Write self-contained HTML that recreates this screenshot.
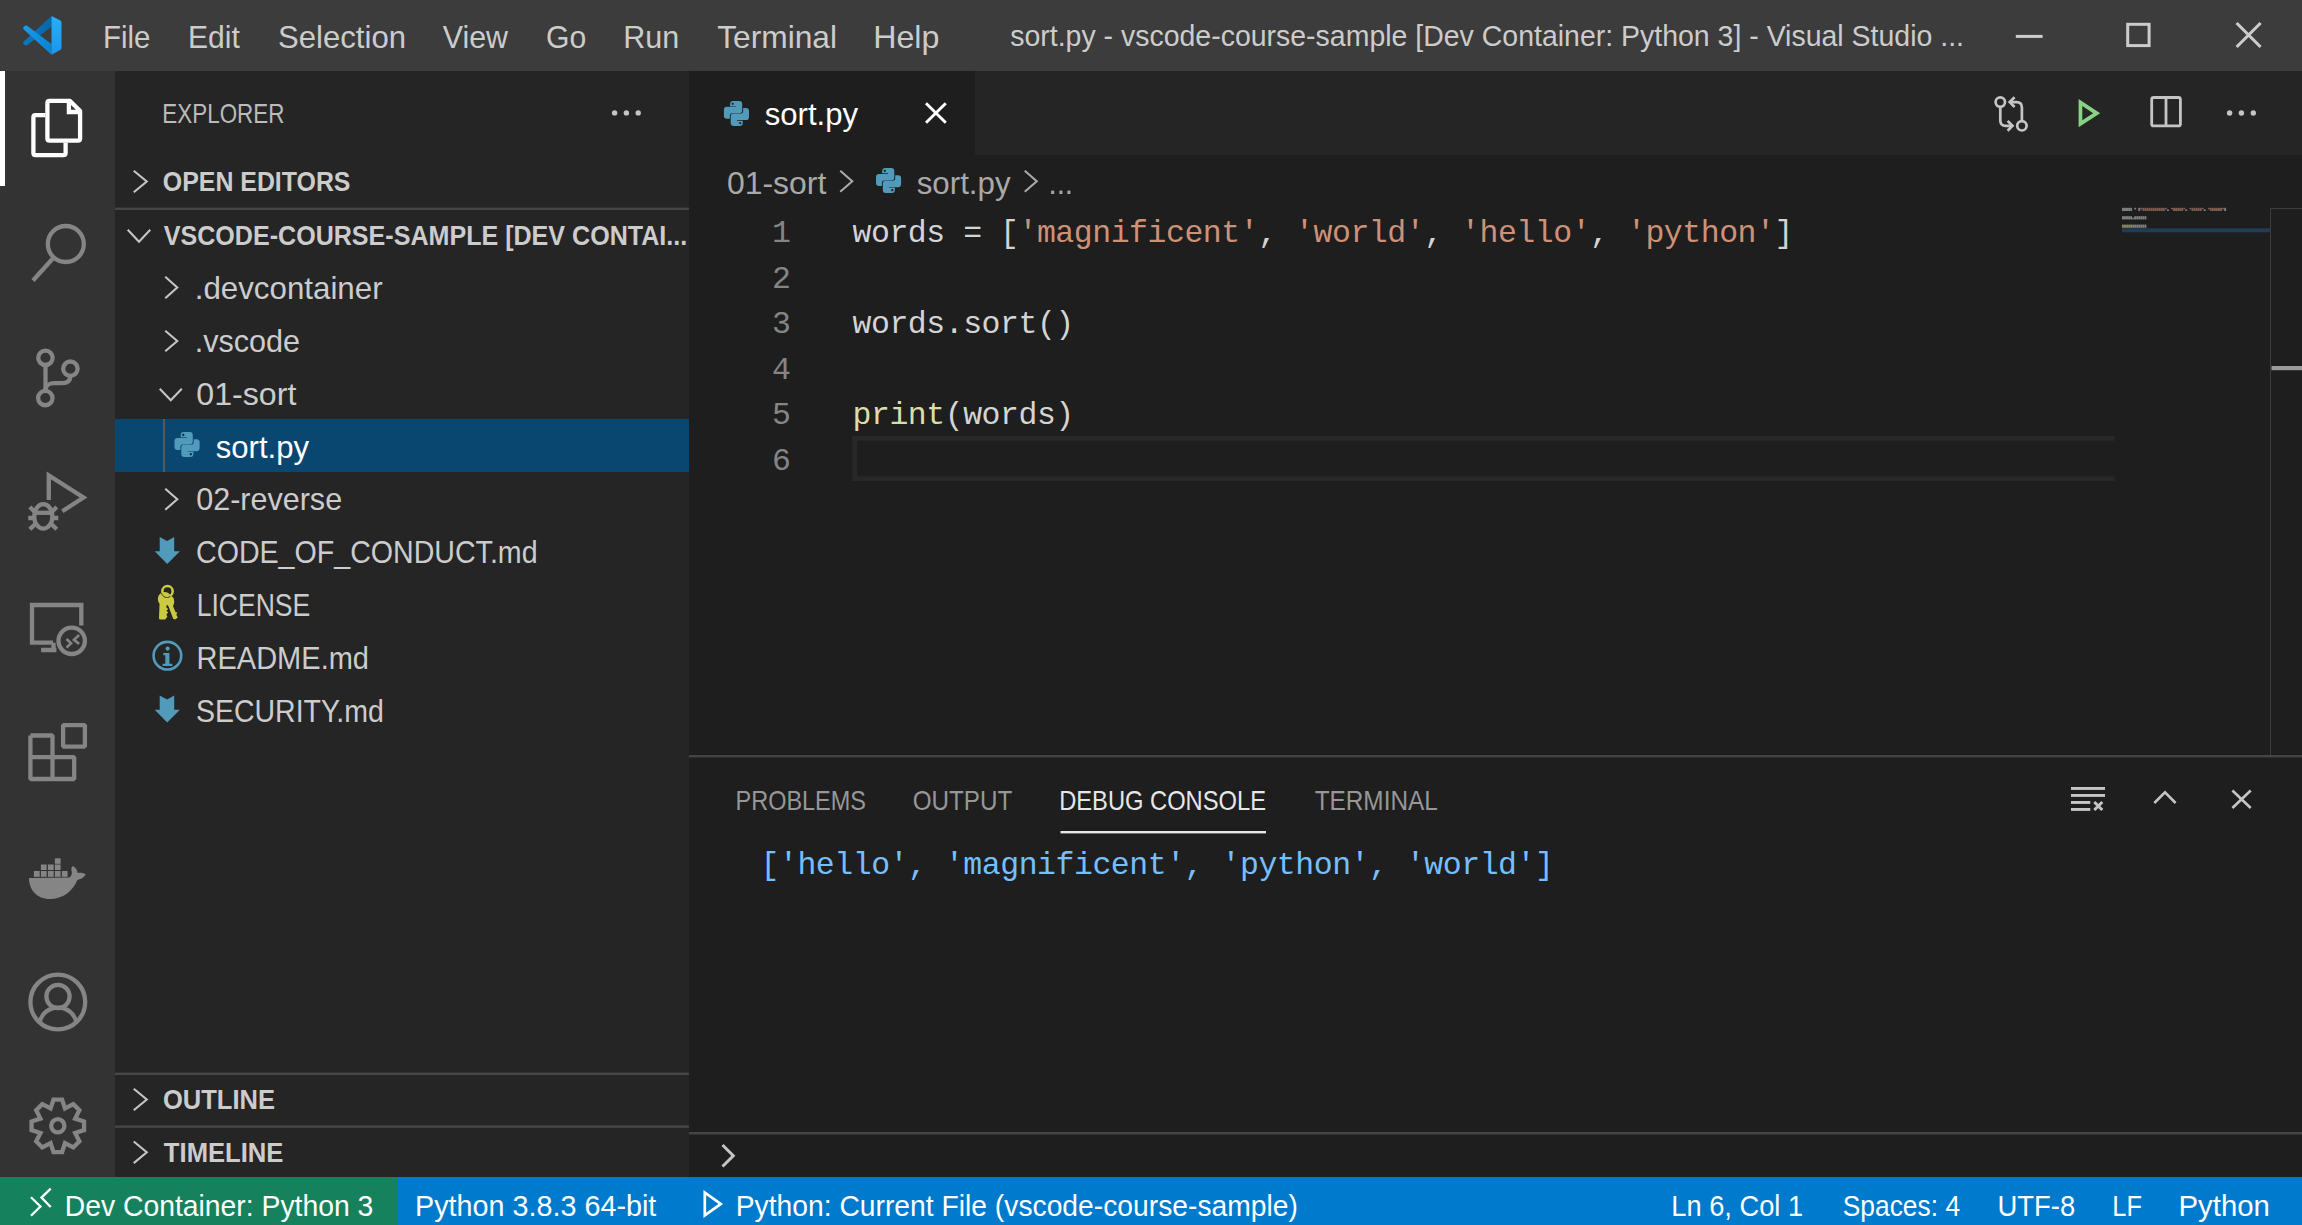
<!DOCTYPE html><html><head><meta charset="utf-8"><style>html,body{margin:0;padding:0;width:2302px;height:1225px;overflow:hidden;background:#1e1e1e}svg{position:absolute;left:0;top:0;display:block}</style></head><body><svg width="2302" height="1225" viewBox="0 0 2302 1225" font-family='&quot;Liberation Sans&quot;, sans-serif'><rect x="0" y="0" width="2302" height="71" fill="#3c3c3c"/>
<rect x="0" y="71" width="115" height="1106" fill="#333333"/>
<rect x="115" y="71" width="574" height="1106" fill="#252526"/>
<rect x="689" y="71" width="1613" height="1106" fill="#1e1e1e"/>
<rect x="689" y="71" width="1613" height="84" fill="#252526"/>
<rect x="689" y="71" width="286" height="84" fill="#1e1e1e"/>
<rect x="0" y="71" width="5" height="115" fill="#ffffff"/>
<rect x="115" y="207.6" width="574" height="2.4" fill="#464647"/>
<rect x="115" y="1072.6" width="574" height="2.4" fill="#464647"/>
<rect x="115" y="1125.4" width="574" height="2.4" fill="#464647"/>
<rect x="115" y="419" width="574" height="53" fill="#094771"/>
<rect x="163" y="419" width="2" height="53" fill="#585858"/>
<rect x="852.5" y="436" width="1262" height="4.8" fill="#282828"/>
<rect x="852.5" y="476.2" width="1262" height="4.8" fill="#282828"/>
<rect x="852.5" y="436" width="4.8" height="45" fill="#282828"/>
<rect x="2270" y="208" width="1" height="547" fill="#3c3c3c"/><rect x="2270" y="208" width="32" height="1" fill="#3c3c3c"/>
<rect x="2271.5" y="366" width="30.5" height="4.2" fill="#9a9a9a"/>
<rect x="2122" y="228.3" width="148" height="4" fill="#264f78" opacity="0.62"/>
<rect x="689" y="755" width="1613" height="2.4" fill="#444444"/>
<rect x="1060.5" y="831" width="205.5" height="2.4" fill="#e7e7e7"/>
<rect x="689" y="1132" width="1613" height="2.4" fill="#464646"/>
<rect x="0" y="1177" width="2302" height="48" fill="#007acc"/>
<rect x="0" y="1177" width="397.5" height="48" fill="#16825d"/>
<g><text x="103.07" y="48.00" font-size="31.74" font-weight="400" fill="#cccccc" textLength="47.30" lengthAdjust="spacingAndGlyphs">File</text><text x="187.98" y="48.00" font-size="31.74" font-weight="400" fill="#cccccc" textLength="51.83" lengthAdjust="spacingAndGlyphs">Edit</text><text x="278.08" y="48.00" font-size="31.74" font-weight="400" fill="#cccccc" textLength="127.94" lengthAdjust="spacingAndGlyphs">Selection</text><text x="442.79" y="48.00" font-size="31.74" font-weight="400" fill="#cccccc" textLength="65.21" lengthAdjust="spacingAndGlyphs">View</text><text x="546.04" y="48.00" font-size="31.74" font-weight="400" fill="#cccccc" textLength="40.24" lengthAdjust="spacingAndGlyphs">Go</text><text x="623.31" y="48.00" font-size="31.74" font-weight="400" fill="#cccccc" textLength="55.95" lengthAdjust="spacingAndGlyphs">Run</text><text x="717.16" y="48.00" font-size="31.74" font-weight="400" fill="#cccccc" textLength="119.92" lengthAdjust="spacingAndGlyphs">Terminal</text><text x="873.15" y="48.00" font-size="31.74" font-weight="400" fill="#cccccc" textLength="66.23" lengthAdjust="spacingAndGlyphs">Help</text><text x="1010.21" y="46.00" font-size="29.30" font-weight="400" fill="#cccccc" textLength="953.77" lengthAdjust="spacingAndGlyphs">sort.py - vscode-course-sample [Dev Container: Python 3] - Visual Studio ...</text><text x="162.34" y="123.00" font-size="26.86" font-weight="400" fill="#bbbbbb" textLength="122.07" lengthAdjust="spacingAndGlyphs">EXPLORER</text><text x="162.85" y="191.00" font-size="26.86" font-weight="700" fill="#cccccc" textLength="187.61" lengthAdjust="spacingAndGlyphs">OPEN EDITORS</text><text x="163.77" y="244.70" font-size="26.86" font-weight="700" fill="#cccccc" textLength="523.44" lengthAdjust="spacingAndGlyphs">VSCODE-COURSE-SAMPLE [DEV CONTAI...</text><text x="194.72" y="299.20" font-size="31.74" font-weight="400" fill="#cccccc" textLength="187.84" lengthAdjust="spacingAndGlyphs">.devcontainer</text><text x="194.68" y="352.00" font-size="31.74" font-weight="400" fill="#cccccc" textLength="105.42" lengthAdjust="spacingAndGlyphs">.vscode</text><text x="196.33" y="404.80" font-size="31.74" font-weight="400" fill="#cccccc" textLength="99.99" lengthAdjust="spacingAndGlyphs">01-sort</text><text x="215.73" y="457.60" font-size="31.74" font-weight="400" fill="#ffffff" textLength="93.24" lengthAdjust="spacingAndGlyphs">sort.py</text><text x="196.24" y="510.40" font-size="31.74" font-weight="400" fill="#cccccc" textLength="145.87" lengthAdjust="spacingAndGlyphs">02-reverse</text><text x="196.02" y="563.20" font-size="31.74" font-weight="400" fill="#cccccc" textLength="341.55" lengthAdjust="spacingAndGlyphs">CODE_OF_CONDUCT.md</text><text x="196.63" y="616.00" font-size="31.74" font-weight="400" fill="#cccccc" textLength="113.66" lengthAdjust="spacingAndGlyphs">LICENSE</text><text x="196.52" y="668.80" font-size="31.74" font-weight="400" fill="#cccccc" textLength="172.48" lengthAdjust="spacingAndGlyphs">README.md</text><text x="195.89" y="721.60" font-size="31.74" font-weight="400" fill="#cccccc" textLength="188.02" lengthAdjust="spacingAndGlyphs">SECURITY.md</text><text x="162.97" y="1109.00" font-size="26.86" font-weight="700" fill="#cccccc" textLength="112.07" lengthAdjust="spacingAndGlyphs">OUTLINE</text><text x="163.87" y="1162.00" font-size="26.86" font-weight="700" fill="#cccccc" textLength="119.55" lengthAdjust="spacingAndGlyphs">TIMELINE</text><text x="764.73" y="125.00" font-size="31.74" font-weight="400" fill="#ffffff" textLength="93.24" lengthAdjust="spacingAndGlyphs">sort.py</text><text x="726.92" y="194.00" font-size="31.74" font-weight="400" fill="#a9a9a9" textLength="99.44" lengthAdjust="spacingAndGlyphs">01-sort</text><text x="916.73" y="194.00" font-size="31.74" font-weight="400" fill="#a9a9a9" textLength="93.83" lengthAdjust="spacingAndGlyphs">sort.py</text><text x="1048.47" y="194.00" font-size="31.74" font-weight="400" fill="#a9a9a9" textLength="24.58" lengthAdjust="spacingAndGlyphs">...</text><text x="735.55" y="809.50" font-size="26.86" font-weight="400" fill="#979797" textLength="130.39" lengthAdjust="spacingAndGlyphs">PROBLEMS</text><text x="912.69" y="809.50" font-size="26.86" font-weight="400" fill="#979797" textLength="99.58" lengthAdjust="spacingAndGlyphs">OUTPUT</text><text x="1059.16" y="809.50" font-size="26.86" font-weight="400" fill="#e7e7e7" textLength="206.84" lengthAdjust="spacingAndGlyphs">DEBUG CONSOLE</text><text x="1314.65" y="809.50" font-size="26.86" font-weight="400" fill="#979797" textLength="123.13" lengthAdjust="spacingAndGlyphs">TERMINAL</text><text x="64.78" y="1216.00" font-size="29.30" font-weight="400" fill="#ffffff" textLength="308.51" lengthAdjust="spacingAndGlyphs">Dev Container: Python 3</text><text x="415.09" y="1216.00" font-size="29.30" font-weight="400" fill="#ffffff" textLength="241.23" lengthAdjust="spacingAndGlyphs">Python 3.8.3 64-bit</text><text x="735.79" y="1216.00" font-size="29.30" font-weight="400" fill="#ffffff" textLength="562.09" lengthAdjust="spacingAndGlyphs">Python: Current File (vscode-course-sample)</text><text x="1671.32" y="1216.00" font-size="29.30" font-weight="400" fill="#ffffff" textLength="131.77" lengthAdjust="spacingAndGlyphs">Ln 6, Col 1</text><text x="1842.75" y="1216.00" font-size="29.30" font-weight="400" fill="#ffffff" textLength="117.30" lengthAdjust="spacingAndGlyphs">Spaces: 4</text><text x="1997.47" y="1216.00" font-size="29.30" font-weight="400" fill="#ffffff" textLength="77.72" lengthAdjust="spacingAndGlyphs">UTF-8</text><text x="2112.36" y="1216.00" font-size="29.30" font-weight="400" fill="#ffffff" textLength="29.66" lengthAdjust="spacingAndGlyphs">LF</text><text x="2178.48" y="1216.00" font-size="29.30" font-weight="400" fill="#ffffff" textLength="91.42" lengthAdjust="spacingAndGlyphs">Python</text></g><text x="772.06" y="242.00" font-size="31.50" fill="#858585" font-family='&quot;Liberation Mono&quot;, monospace' xml:space="preserve">1</text><text x="852.50 870.94 889.38 907.82 926.26 944.70 963.14 981.58 1000.02" y="242.00" font-size="31.50" fill="#d4d4d4" font-family='&quot;Liberation Mono&quot;, monospace' xml:space="preserve">words&#160;=&#160;[</text><text x="1018.46 1036.90 1055.34 1073.78 1092.22 1110.66 1129.10 1147.54 1165.98 1184.42 1202.86 1221.30 1239.74" y="242.00" font-size="31.50" fill="#ce9178" font-family='&quot;Liberation Mono&quot;, monospace' xml:space="preserve">&#x27;magnificent&#x27;</text><text x="1258.18 1276.62" y="242.00" font-size="31.50" fill="#d4d4d4" font-family='&quot;Liberation Mono&quot;, monospace' xml:space="preserve">,&#160;</text><text x="1295.06 1313.50 1331.94 1350.38 1368.82 1387.26 1405.70" y="242.00" font-size="31.50" fill="#ce9178" font-family='&quot;Liberation Mono&quot;, monospace' xml:space="preserve">&#x27;world&#x27;</text><text x="1424.14 1442.58" y="242.00" font-size="31.50" fill="#d4d4d4" font-family='&quot;Liberation Mono&quot;, monospace' xml:space="preserve">,&#160;</text><text x="1461.02 1479.46 1497.90 1516.34 1534.78 1553.22 1571.66" y="242.00" font-size="31.50" fill="#ce9178" font-family='&quot;Liberation Mono&quot;, monospace' xml:space="preserve">&#x27;hello&#x27;</text><text x="1590.10 1608.54" y="242.00" font-size="31.50" fill="#d4d4d4" font-family='&quot;Liberation Mono&quot;, monospace' xml:space="preserve">,&#160;</text><text x="1626.98 1645.42 1663.86 1682.30 1700.74 1719.18 1737.62 1756.06" y="242.00" font-size="31.50" fill="#ce9178" font-family='&quot;Liberation Mono&quot;, monospace' xml:space="preserve">&#x27;python&#x27;</text><text x="1774.50" y="242.00" font-size="31.50" fill="#d4d4d4" font-family='&quot;Liberation Mono&quot;, monospace' xml:space="preserve">]</text><text x="772.06" y="287.60" font-size="31.50" fill="#858585" font-family='&quot;Liberation Mono&quot;, monospace' xml:space="preserve">2</text><text x="772.06" y="333.20" font-size="31.50" fill="#858585" font-family='&quot;Liberation Mono&quot;, monospace' xml:space="preserve">3</text><text x="852.50 870.94 889.38 907.82 926.26 944.70 963.14 981.58 1000.02 1018.46 1036.90 1055.34" y="333.20" font-size="31.50" fill="#d4d4d4" font-family='&quot;Liberation Mono&quot;, monospace' xml:space="preserve">words.sort()</text><text x="772.06" y="378.80" font-size="31.50" fill="#858585" font-family='&quot;Liberation Mono&quot;, monospace' xml:space="preserve">4</text><text x="772.06" y="424.40" font-size="31.50" fill="#858585" font-family='&quot;Liberation Mono&quot;, monospace' xml:space="preserve">5</text><text x="852.50 870.94 889.38 907.82 926.26" y="424.40" font-size="31.50" fill="#dcdcaa" font-family='&quot;Liberation Mono&quot;, monospace' xml:space="preserve">print</text><text x="944.70 963.14 981.58 1000.02 1018.46 1036.90 1055.34" y="424.40" font-size="31.50" fill="#d4d4d4" font-family='&quot;Liberation Mono&quot;, monospace' xml:space="preserve">(words)</text><text x="772.06" y="470.00" font-size="31.50" fill="#858585" font-family='&quot;Liberation Mono&quot;, monospace' xml:space="preserve">6</text><text x="760.50 778.94 797.38 815.82 834.26 852.70 871.14 889.58 908.02 926.46 944.90 963.34 981.78 1000.22 1018.66 1037.10 1055.54 1073.98 1092.42 1110.86 1129.30 1147.74 1166.18 1184.62 1203.06 1221.50 1239.94 1258.38 1276.82 1295.26 1313.70 1332.14 1350.58 1369.02 1387.46 1405.90 1424.34 1442.78 1461.22 1479.66 1498.10 1516.54 1534.98" y="874.00" font-size="31.50" fill="#75beff" font-family='&quot;Liberation Mono&quot;, monospace' xml:space="preserve">[&#x27;hello&#x27;,&#160;&#x27;magnificent&#x27;,&#160;&#x27;python&#x27;,&#160;&#x27;world&#x27;]</text><!-- vscode logo -->
<defs>
<linearGradient id="lg1" x1="0" y1="0" x2="1" y2="0"><stop offset="0" stop-color="#0b78c2"/><stop offset="1" stop-color="#0767a8"/></linearGradient>
<linearGradient id="lg2" x1="0" y1="0" x2="1" y2="0"><stop offset="0" stop-color="#1b9be8"/><stop offset="1" stop-color="#0a83d2"/></linearGradient>
<linearGradient id="lg3" x1="0" y1="0" x2="0" y2="1"><stop offset="0" stop-color="#26aef6"/><stop offset="1" stop-color="#1c97ec"/></linearGradient>
</defs>
<path d="M51.5,15.9 L51.5,26.7 L27.3,45 Q26,46 24.6,44.8 L23.6,43.9 Q22.4,42.6 23.8,41.4 Z" fill="url(#lg1)"/>
<path d="M26.8,25.4 L51.5,43.9 L51.5,54.7 L23.6,29.3 Q22.4,28 23.7,26.9 L24.5,26.2 Q25.6,25.2 26.8,25.4 Z" fill="url(#lg2)"/>
<path d="M51.5,15.9 L60.2,20.2 Q61.5,20.9 61.5,22.4 V48 Q61.5,49.5 60.2,50.1 L51.5,54.7 Z" fill="url(#lg3)"/>
<!-- activity bar icons -->
<g fill="none" stroke="#ffffff" stroke-width="4.3" stroke-linejoin="round">
 <path d="M47.4,103 Q47.4,100.9 49.5,100.9 H70 L80.1,111 V138.5 Q80.1,140.6 78,140.6 H49.5 Q47.4,140.6 47.4,138.5 Z"/>
 <path d="M68.9,100.9 V112 H80.1" stroke-linejoin="miter"/>
 <path d="M45.3,115.2 H35.5 Q33.4,115.2 33.4,117.3 V153 Q33.4,155.1 35.5,155.1 H63.5 Q65.6,155.1 65.6,153 V142.8"/>
</g>
<g fill="none" stroke="#858585" stroke-width="4.3">
 <circle cx="65.8" cy="244" r="18"/>
 <path d="M33,280.5 L52.8,258.5"/>
 <circle cx="45.45" cy="357.8" r="7.2"/>
 <circle cx="45.3" cy="398.05" r="7.2"/>
 <circle cx="70.4" cy="368.7" r="7.2"/>
 <path d="M45.5,365 V390.8"/>
 <path d="M70.4,376 C70.4,381 67,383.2 62,383.2 H53.5 C49,383.2 45.5,386 45.5,390.5"/>
 <path d="M48.8,500 V475.5 L83.5,497.5 L62.3,511.2" stroke-linejoin="miter"/>
 <ellipse cx="43.3" cy="516.4" rx="9.1" ry="12.2"/>
 <path d="M34.5,512.8 H52.1"/>
 <path d="M29.8,507 L35.2,512.3 M28.3,518 H33.5 M29.8,529.3 L35,524.3 M56.8,507 L51.4,512.3 M58.3,518 H53.1 M56.8,529.3 L51.6,524.3"/>
 <path d="M53,642.7 H32 V605 H81.3 V625.5"/>
 <path d="M41.1,650 H56.4 M53.5,642.7 V650" stroke-width="4.3"/>
 <circle cx="71.7" cy="640.8" r="13.2"/>
 <path d="M66.5,639 L71.1,643.3 L66.5,647.6 M79.1,635 L73.9,639.9 L79.1,643.9" stroke-width="2.6"/>
 <path d="M30.4,735.5 H52.5 V779 M30.4,735.5 V779 H74.2 V757.2 H30.4" stroke-linejoin="bevel"/>
 <rect x="63.1" y="725.1" width="21.8" height="21.5" stroke-linejoin="bevel"/>
 <circle cx="57.8" cy="1002" r="27.4"/>
 <circle cx="58" cy="996.5" r="11.6"/>
 <path d="M40,1021 A18.5,17.5 0 0 1 76,1021"/>
 <circle cx="57.8" cy="1125.8" r="6.6"/>
 
</g>
<g fill="#858585">
 <rect x="33.9" y="871" width="5.8" height="5.8"/><rect x="40.9" y="871" width="5.7" height="5.8"/><rect x="47.9" y="871" width="5.8" height="5.8"/><rect x="54.9" y="871" width="5.7" height="5.8"/><rect x="61.9" y="871" width="5.7" height="5.8"/>
 <rect x="40.9" y="864.5" width="5.7" height="5.5"/><rect x="47.9" y="864.5" width="5.8" height="5.5"/><rect x="54.9" y="864.5" width="5.7" height="5.5"/>
 <rect x="54.9" y="858.3" width="5.7" height="5.5"/>
 <path d="M29,878 L69.5,877.6 C71.5,876 72.5,873 71.5,870.5 C71,868 72,866 73.3,866.2 C75.5,867.5 77.5,870 77.6,873 C80,872.5 84,873 85.8,874.5 C84,877.5 80.5,879.5 77.3,880 C73,891 63,899 49.7,899 C37,899 29,890 29,878 Z"/>
</g>
<path d="M50.61,1108.43 L53.50,1099.55 L62.10,1099.55 L64.99,1108.43 L73.32,1104.20 L79.40,1110.28 L75.17,1118.61 L84.05,1121.50 L84.05,1130.10 L75.17,1132.99 L79.40,1141.32 L73.32,1147.40 L64.99,1143.17 L62.10,1152.05 L53.50,1152.05 L50.61,1143.17 L42.28,1147.40 L36.20,1141.32 L40.43,1132.99 L31.55,1130.10 L31.55,1121.50 L40.43,1118.61 L36.20,1110.28 L42.28,1104.20 Z" fill="none" stroke="#858585" stroke-width="4.3" stroke-linejoin="miter"/>
<g transform="translate(723.90,100.90) scale(1.000)"><path d="M12,5.9 H3 Q0,5.9 0,9 V14.9 Q0,17.9 3,17.9 H5.9 V14.6 Q5.9,12.4 8.5,12.4 H15.5 Q18.3,12.4 18.3,9.6 V3 Q18.3,0 15.3,0 H9.2 Q6.2,0 6.2,3 V5.3 H12 Z" fill="#519aba"/><path d="M12,5.9 H3 Q0,5.9 0,9 V14.9 Q0,17.9 3,17.9 H5.9 V14.6 Q5.9,12.4 8.5,12.4 H15.5 Q18.3,12.4 18.3,9.6 V3 Q18.3,0 15.3,0 H9.2 Q6.2,0 6.2,3 V5.3 H12 Z" fill="#519aba" transform="rotate(180 12.55 12.55)"/><circle cx="8.8" cy="2.9" r="1.1" fill="#1e1e1e"/><circle cx="16.3" cy="22.2" r="1.1" fill="#1e1e1e"/></g>
<g transform="translate(876.00,168.00) scale(1.000)"><path d="M12,5.9 H3 Q0,5.9 0,9 V14.9 Q0,17.9 3,17.9 H5.9 V14.6 Q5.9,12.4 8.5,12.4 H15.5 Q18.3,12.4 18.3,9.6 V3 Q18.3,0 15.3,0 H9.2 Q6.2,0 6.2,3 V5.3 H12 Z" fill="#519aba"/><path d="M12,5.9 H3 Q0,5.9 0,9 V14.9 Q0,17.9 3,17.9 H5.9 V14.6 Q5.9,12.4 8.5,12.4 H15.5 Q18.3,12.4 18.3,9.6 V3 Q18.3,0 15.3,0 H9.2 Q6.2,0 6.2,3 V5.3 H12 Z" fill="#519aba" transform="rotate(180 12.55 12.55)"/><circle cx="8.8" cy="2.9" r="1.1" fill="#1e1e1e"/><circle cx="16.3" cy="22.2" r="1.1" fill="#1e1e1e"/></g>
<g transform="translate(174.50,432.00) scale(1.000)"><path d="M12,5.9 H3 Q0,5.9 0,9 V14.9 Q0,17.9 3,17.9 H5.9 V14.6 Q5.9,12.4 8.5,12.4 H15.5 Q18.3,12.4 18.3,9.6 V3 Q18.3,0 15.3,0 H9.2 Q6.2,0 6.2,3 V5.3 H12 Z" fill="#519aba"/><path d="M12,5.9 H3 Q0,5.9 0,9 V14.9 Q0,17.9 3,17.9 H5.9 V14.6 Q5.9,12.4 8.5,12.4 H15.5 Q18.3,12.4 18.3,9.6 V3 Q18.3,0 15.3,0 H9.2 Q6.2,0 6.2,3 V5.3 H12 Z" fill="#519aba" transform="rotate(180 12.55 12.55)"/><circle cx="8.8" cy="2.9" r="1.1" fill="#1e1e1e"/><circle cx="16.3" cy="22.2" r="1.1" fill="#1e1e1e"/></g>
<path d="M133.74,170.74 L146.76,181.50 L133.74,192.26" fill="none" stroke="#c5c5c5" stroke-width="2.10"/>
<path d="M127.73,229.74 L139.00,241.76 L150.26,229.74" fill="none" stroke="#c5c5c5" stroke-width="2.10"/>
<path d="M165.24,276.74 L177.26,287.50 L165.24,298.26" fill="none" stroke="#c5c5c5" stroke-width="2.10"/>
<path d="M165.24,330.74 L177.26,341.00 L165.24,351.26" fill="none" stroke="#c5c5c5" stroke-width="2.10"/>
<path d="M159.74,388.74 L170.75,400.26 L181.76,388.74" fill="none" stroke="#c5c5c5" stroke-width="2.10"/>
<path d="M165.24,488.74 L177.26,499.25 L165.24,509.76" fill="none" stroke="#c5c5c5" stroke-width="2.10"/>
<path d="M133.74,1088.73 L146.76,1099.50 L133.74,1110.27" fill="none" stroke="#c5c5c5" stroke-width="2.10"/>
<path d="M133.74,1141.53 L146.76,1152.30 L133.74,1163.07" fill="none" stroke="#c5c5c5" stroke-width="2.10"/>
<path d="M840.24,170.74 L852.26,181.25 L840.24,191.76" fill="none" stroke="#a9a9a9" stroke-width="2.10"/>
<path d="M1024.73,170.74 L1036.77,181.25 L1024.73,191.76" fill="none" stroke="#a9a9a9" stroke-width="2.10"/>
<path d="M722.5,1145 L733.3,1155.7 L722.5,1166.5" fill="none" stroke="#c5c5c5" stroke-width="3"/>
<path d="M159.7,537.00 L167.1,541.00 L174.2,537.00 V551.30 H179.9 L167.2,564.00 L154.7,551.30 H159.7 Z" fill="#519aba"/>
<path d="M159.7,695.40 L167.1,699.40 L174.2,695.40 V709.70 H179.9 L167.2,722.40 L154.7,709.70 H159.7 Z" fill="#519aba"/>
<circle cx="167.4" cy="655.7" r="13.8" fill="none" stroke="#519aba" stroke-width="2.6"/>
<circle cx="167.6" cy="648.6" r="2.1" fill="#519aba"/>
<path d="M165.2,653 H169.4 V663.8 H172.3 V666 H162.6 V663.8 H165.3 V655.2 H163.3 V653 Z" fill="#519aba"/>
<g fill="#cbcb41"><ellipse cx="170.6" cy="601.5" rx="3.6" ry="5.5"/><path d="M168,605 L171.8,603.2 L175.6,612.2 L177.4,612.6 L176.3,614.8 L177.8,617.6 L175.2,619.5 L173.2,618.8 Z"/><circle cx="164.7" cy="598.9" r="6.9"/><path d="M159.6,603 H166.4 V607.6 L168.2,608.9 L166.4,610.8 L168.2,612.4 L166.4,614.4 L167.4,616.6 L165.2,619.6 H160.4 Q158.9,619.6 159,618 Z"/><circle cx="167.5" cy="591.2" r="5.2" fill="none" stroke="#cbcb41" stroke-width="2.5"/><path d="M161.6,593.2 A5.4,5.4 0 0 0 170.2,596.4" fill="none" stroke="#3a3a1a" stroke-width="1"/></g>
<circle cx="614.6" cy="112.9" r="2.7" fill="#c5c5c5"/>
<circle cx="626.4" cy="112.9" r="2.7" fill="#c5c5c5"/>
<circle cx="638.2" cy="112.9" r="2.7" fill="#c5c5c5"/>
<path d="M926,103.2 L945.8,122.8 M945.8,103.2 L926,122.8" stroke="#ffffff" stroke-width="2.9" fill="none"/>
<g fill="none" stroke="#c5c5c5" stroke-width="2.7"><circle cx="2000.3" cy="102.1" r="4.7"/><circle cx="2021.9" cy="125.8" r="4.7"/><path d="M2000.3,106.8 V120.5 Q2000.3,125.8 2005.6,125.8 H2012"/><path d="M2007.6,120.9 L2012.5,125.8 L2007.6,130.7"/><path d="M2021.9,121.1 V107.4 Q2021.9,102.1 2016.6,102.1 H2010"/><path d="M2014.6,97.2 L2009.7,102.1 L2014.6,107"/></g>
<path d="M2078.6,98.9 L2100.2,113.2 L2078.6,127.3 Z M2082.3,105.9 V120.2 L2093.2,113.2 Z" fill="#89d185" fill-rule="evenodd"/>
<g fill="none" stroke="#c5c5c5" stroke-width="2.8"><rect x="2151.7" y="97.5" width="28.7" height="28.4" rx="2"/><path d="M2166,97.5 V126"/></g>
<circle cx="2229.6" cy="113" r="2.7" fill="#c5c5c5"/>
<circle cx="2241.4" cy="113" r="2.7" fill="#c5c5c5"/>
<circle cx="2253.3" cy="113" r="2.7" fill="#c5c5c5"/>
<rect x="2015.8" y="34.9" width="26.8" height="3" fill="#cccccc"/>
<rect x="2127.7" y="24.3" width="21.4" height="21.3" fill="none" stroke="#cccccc" stroke-width="3"/>
<path d="M2236.6,23 L2260.6,47 M2260.6,23 L2236.6,47" stroke="#cccccc" stroke-width="3.1" fill="none"/>
<g fill="#c5c5c5"><rect x="2071" y="787" width="34" height="2.9"/><rect x="2071" y="794" width="34" height="2.9"/><rect x="2071" y="801" width="19.3" height="2.9"/><rect x="2071" y="808" width="19.3" height="2.9"/></g>
<path d="M2094.3,802 L2102.3,810 M2102.3,802 L2094.3,810" stroke="#c5c5c5" stroke-width="3" fill="none"/>
<path d="M2154.3,803 L2165,792.3 L2175.6,803" stroke="#c5c5c5" stroke-width="2.5" fill="none"/>
<path d="M2232.4,790.5 L2250.7,808 M2250.7,790.5 L2232.4,808" stroke="#c5c5c5" stroke-width="2.6" fill="none"/>
<path d="M31,1197.3 L40.4,1206.5 L31,1215.8 M50.7,1188.6 L41.5,1197.6 L50.7,1207" stroke="#ffffff" stroke-width="2.3" fill="none"/>
<path d="M704.8,1192.6 L720.8,1203.9 L704.8,1215.4 Z" stroke="#ffffff" stroke-width="2.7" fill="none" stroke-linejoin="miter"/>
<g opacity="0.55"><rect x="2122.00" y="207.80" width="1.9" height="3.2" fill="#d4d4d4"/><rect x="2124.04" y="207.80" width="1.9" height="3.2" fill="#d4d4d4"/><rect x="2126.09" y="207.80" width="1.9" height="3.2" fill="#d4d4d4"/><rect x="2128.13" y="207.80" width="1.9" height="3.2" fill="#d4d4d4"/><rect x="2130.18" y="207.80" width="1.9" height="3.2" fill="#d4d4d4"/><rect x="2134.26" y="207.80" width="1.9" height="1.6" fill="#d4d4d4"/><rect x="2138.35" y="207.80" width="1.9" height="3.2" fill="#d4d4d4"/><rect x="2140.40" y="207.80" width="1.9" height="1.6" fill="#ce9178"/><rect x="2142.44" y="207.80" width="1.9" height="3.2" fill="#ce9178"/><rect x="2144.48" y="207.80" width="1.9" height="3.2" fill="#ce9178"/><rect x="2146.53" y="207.80" width="1.9" height="3.2" fill="#ce9178"/><rect x="2148.57" y="207.80" width="1.9" height="3.2" fill="#ce9178"/><rect x="2150.62" y="207.80" width="1.9" height="3.2" fill="#ce9178"/><rect x="2152.66" y="207.80" width="1.9" height="3.2" fill="#ce9178"/><rect x="2154.70" y="207.80" width="1.9" height="3.2" fill="#ce9178"/><rect x="2156.75" y="207.80" width="1.9" height="3.2" fill="#ce9178"/><rect x="2158.79" y="207.80" width="1.9" height="3.2" fill="#ce9178"/><rect x="2160.84" y="207.80" width="1.9" height="3.2" fill="#ce9178"/><rect x="2162.88" y="207.80" width="1.9" height="3.2" fill="#ce9178"/><rect x="2164.92" y="207.80" width="1.9" height="1.6" fill="#ce9178"/><rect x="2166.97" y="209.40" width="1.9" height="1.6" fill="#d4d4d4"/><rect x="2171.06" y="207.80" width="1.9" height="1.6" fill="#ce9178"/><rect x="2173.10" y="207.80" width="1.9" height="3.2" fill="#ce9178"/><rect x="2175.14" y="207.80" width="1.9" height="3.2" fill="#ce9178"/><rect x="2177.19" y="207.80" width="1.9" height="3.2" fill="#ce9178"/><rect x="2179.23" y="207.80" width="1.9" height="3.2" fill="#ce9178"/><rect x="2181.28" y="207.80" width="1.9" height="3.2" fill="#ce9178"/><rect x="2183.32" y="207.80" width="1.9" height="1.6" fill="#ce9178"/><rect x="2185.36" y="209.40" width="1.9" height="1.6" fill="#d4d4d4"/><rect x="2189.45" y="207.80" width="1.9" height="1.6" fill="#ce9178"/><rect x="2191.50" y="207.80" width="1.9" height="3.2" fill="#ce9178"/><rect x="2193.54" y="207.80" width="1.9" height="3.2" fill="#ce9178"/><rect x="2195.58" y="207.80" width="1.9" height="3.2" fill="#ce9178"/><rect x="2197.63" y="207.80" width="1.9" height="3.2" fill="#ce9178"/><rect x="2199.67" y="207.80" width="1.9" height="3.2" fill="#ce9178"/><rect x="2201.72" y="207.80" width="1.9" height="1.6" fill="#ce9178"/><rect x="2203.76" y="209.40" width="1.9" height="1.6" fill="#d4d4d4"/><rect x="2207.85" y="207.80" width="1.9" height="1.6" fill="#ce9178"/><rect x="2209.89" y="207.80" width="1.9" height="3.2" fill="#ce9178"/><rect x="2211.94" y="207.80" width="1.9" height="3.2" fill="#ce9178"/><rect x="2213.98" y="207.80" width="1.9" height="3.2" fill="#ce9178"/><rect x="2216.02" y="207.80" width="1.9" height="3.2" fill="#ce9178"/><rect x="2218.07" y="207.80" width="1.9" height="3.2" fill="#ce9178"/><rect x="2220.11" y="207.80" width="1.9" height="3.2" fill="#ce9178"/><rect x="2222.16" y="207.80" width="1.9" height="1.6" fill="#ce9178"/><rect x="2224.20" y="207.80" width="1.9" height="3.2" fill="#d4d4d4"/><rect x="2122.00" y="216.20" width="1.9" height="3.2" fill="#d4d4d4"/><rect x="2124.04" y="216.20" width="1.9" height="3.2" fill="#d4d4d4"/><rect x="2126.09" y="216.20" width="1.9" height="3.2" fill="#d4d4d4"/><rect x="2128.13" y="216.20" width="1.9" height="3.2" fill="#d4d4d4"/><rect x="2130.18" y="216.20" width="1.9" height="3.2" fill="#d4d4d4"/><rect x="2132.22" y="217.80" width="1.9" height="1.6" fill="#d4d4d4"/><rect x="2134.26" y="216.20" width="1.9" height="3.2" fill="#d4d4d4"/><rect x="2136.31" y="216.20" width="1.9" height="3.2" fill="#d4d4d4"/><rect x="2138.35" y="216.20" width="1.9" height="3.2" fill="#d4d4d4"/><rect x="2140.40" y="216.20" width="1.9" height="3.2" fill="#d4d4d4"/><rect x="2142.44" y="216.20" width="1.9" height="3.2" fill="#d4d4d4"/><rect x="2144.48" y="216.20" width="1.9" height="3.2" fill="#d4d4d4"/><rect x="2122.00" y="224.60" width="1.9" height="3.2" fill="#dcdcaa"/><rect x="2124.04" y="224.60" width="1.9" height="3.2" fill="#dcdcaa"/><rect x="2126.09" y="224.60" width="1.9" height="3.2" fill="#dcdcaa"/><rect x="2128.13" y="224.60" width="1.9" height="3.2" fill="#dcdcaa"/><rect x="2130.18" y="224.60" width="1.9" height="3.2" fill="#dcdcaa"/><rect x="2132.22" y="224.60" width="1.9" height="3.2" fill="#d4d4d4"/><rect x="2134.26" y="224.60" width="1.9" height="3.2" fill="#d4d4d4"/><rect x="2136.31" y="224.60" width="1.9" height="3.2" fill="#d4d4d4"/><rect x="2138.35" y="224.60" width="1.9" height="3.2" fill="#d4d4d4"/><rect x="2140.40" y="224.60" width="1.9" height="3.2" fill="#d4d4d4"/><rect x="2142.44" y="224.60" width="1.9" height="3.2" fill="#d4d4d4"/><rect x="2144.48" y="224.60" width="1.9" height="3.2" fill="#d4d4d4"/></g></svg></body></html>
